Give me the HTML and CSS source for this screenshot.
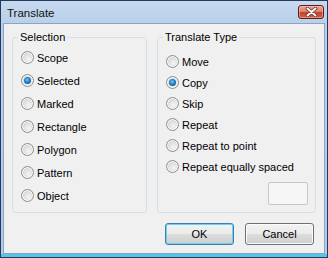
FILE: index.html
```html
<!DOCTYPE html>
<html lang="en">
<head>
  <meta charset="UTF-8" />
  <title>Translate</title>
  <link rel="stylesheet" href="styles.css">
</head>
<body>
  <div class="window">
    <div class="titlebar">
      <span class="title">Translate</span>
      <button class="close" title="Close">
        <svg width="13" height="10" viewBox="0 0 13 10">
          <path d="M2.5 1.5 L10.5 8.5 M10.5 1.5 L2.5 8.5" stroke="#6a2a20" stroke-width="3.6" stroke-linecap="round" fill="none"/>
          <path d="M2.5 1.5 L10.5 8.5 M10.5 1.5 L2.5 8.5" stroke="#fff" stroke-width="2" stroke-linecap="round" fill="none"/>
        </svg>
      </button>
    </div>

    <div class="client">
      <div class="groups">
        <!-- Selection -->
        <fieldset class="group">
          <legend>Selection</legend>
          <label class="option"><span class="radio"></span>Scope</label>
          <label class="option"><span class="radio checked"></span>Selected</label>
          <label class="option"><span class="radio"></span>Marked</label>
          <label class="option"><span class="radio"></span>Rectangle</label>
          <label class="option"><span class="radio"></span>Polygon</label>
          <label class="option"><span class="radio"></span>Pattern</label>
          <label class="option"><span class="radio"></span>Object</label>
        </fieldset>

        <!-- Translate Type -->
        <fieldset class="group group-type">
          <legend>Translate Type</legend>
          <label class="option"><span class="radio"></span>Move</label>
          <label class="option"><span class="radio checked"></span>Copy</label>
          <label class="option"><span class="radio"></span>Skip</label>
          <label class="option"><span class="radio"></span>Repeat</label>
          <label class="option"><span class="radio"></span>Repeat to point</label>
          <label class="option"><span class="radio"></span>Repeat equally spaced</label>
          <div class="count-box"></div>
        </fieldset>
      </div>

      <div class="actions">
        <button class="btn btn-default">OK</button>
        <button class="btn">Cancel</button>
      </div>
    </div>
  </div>
</body>
</html>
```

FILE: styles.css
```css
* {
  box-sizing: border-box;
}

body {
  margin: 0;
  font-family: 'Liberation Sans', Arial, sans-serif;
  font-size: 11px;
  color: #000;
  background: #fff;
}

.window {
  width: 328px;
  height: 258px;
  border: 1px solid #25395a;
  padding: 0 2px 3px;
  display: flex;
  flex-direction: column;
  background: linear-gradient(to bottom, #c6d9ef 0, #b9d0ea 22px, #b4cbe7 calc(100% - 3px), #4fc6ea calc(100% - 3px));
}

.titlebar {
  height: 22px;
  display: flex;
  align-items: center;
  justify-content: space-between;
  padding-left: 4px;
}

.title {
  font-size: 11.5px;
  color: #111;
  margin-top: 1px;
}

.close {
  align-self: flex-start;
  margin-top: 4px;
  margin-right: 1px;
  width: 26px;
  height: 14px;
  padding: 0;
  border: 1px solid #5e1e14;
  border-radius: 3px;
  background: linear-gradient(to bottom, #e9a594 0, #dd8570 45%, #c3402a 55%, #d2634a 100%);
  box-shadow: inset 0 0 0 1px rgba(255, 215, 205, 0.45);
  display: flex;
  align-items: center;
  justify-content: center;
}

.client {
  flex: 1;
  background: #f0f0f0;
  border: 1px solid #8ba4c4;
  padding: 7px 8px 0;
}

.groups {
  display: grid;
  grid-template-columns: 135px 159px;
  gap: 10px;
}

.group {
  margin: 0;
  min-width: 0;
  height: 182px;
  border: 1px solid #d5dfe5;
  border-radius: 3px;
  padding: 2px 8px 0;
  display: flex;
  flex-direction: column;
}

.group legend {
  padding: 0 2px;
  margin-left: -3px;
  line-height: 13px;
}

.option {
  display: flex;
  align-items: center;
  height: 23px;
  white-space: nowrap;
}

.group-type {
  padding-top: 7px;
}

.group-type .option {
  height: 21px;
}

.radio {
  width: 13px;
  height: 13px;
  margin-right: 3px;
  flex-shrink: 0;
  border-radius: 50%;
  border: 1px solid #8e8f8f;
  background: radial-gradient(circle at 60% 65%, #f4f4f4 0, #dadada 60%, #c6c6c6 100%);
  box-shadow: inset 0 0 0 1px #f7f7f7;
  display: flex;
  align-items: center;
  justify-content: center;
}

.radio.checked::after {
  content: "";
  width: 7px;
  height: 7px;
  border-radius: 50%;
  background: radial-gradient(circle at 45% 40%, #7cc8f2 0, #1f7fc9 45%, #0b4580 100%);
}

.count-box {
  align-self: flex-end;
  width: 40px;
  height: 23px;
  margin-top: 5px;
  margin-right: -1px;
  border: 1px solid #c6c6c6;
  border-radius: 2px;
  background: #f6f6f6;
}

.actions {
  display: flex;
  justify-content: flex-end;
  gap: 11px;
  margin-top: 10px;
  padding-right: 2px;
}

.btn {
  width: 69px;
  height: 22px;
  padding: 0;
  font-family: inherit;
  font-size: 11px;
  color: #000;
  border: 1px solid #707070;
  border-radius: 3px;
  background: linear-gradient(to bottom, #f2f2f2 0, #ebebeb 50%, #dddddd 50%, #cfcfcf 100%);
  box-shadow: inset 0 0 0 1px #fbfbfb;
}

.btn-default {
  border-color: #3c7fb1;
  box-shadow: inset 0 0 0 1px #6cd0f2;
}
```
